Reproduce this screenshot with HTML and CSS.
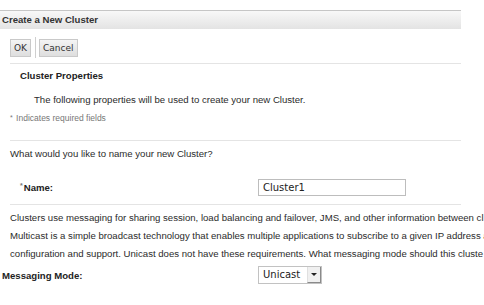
FILE: index.html
```html
<!DOCTYPE html>
<html lang="en">
<head>
<meta charset="UTF-8" />
<meta name="viewport" content="width=device-width, initial-scale=1" />
<title>Create a New Cluster</title>
<link rel="stylesheet" href="styles.css">
</head>
<body>
  <div class="page">
    <div class="titlebar">Create a New Cluster</div>

    <div class="content">
      <div class="toolbar">
        <button type="button" class="btn">OK</button>
        <span class="tb-sep"></span>
        <button type="button" class="btn">Cancel</button>
      </div>

      <section class="section section-props">
        <h2 class="section-title">Cluster Properties</h2>
        <p class="intro">The following properties will be used to create your new Cluster.</p>
        <p class="required-note"><span class="req">*</span> Indicates required fields</p>
      </section>

      <section class="section section-name">
        <p class="question">What would you like to name your new Cluster?</p>
        <div class="field-row">
          <label class="field-label field-label-req" for="cluster-name"><span class="req">*</span>Name:</label>
          <input type="text" id="cluster-name" class="text-input" value="Cluster1">
        </div>
      </section>

      <section class="section section-mode">
        <p class="help">
          Clusters use messaging for sharing session, load balancing and failover, JMS, and other information between cl<br>
          Multicast is a simple broadcast technology that enables multiple applications to subscribe to a given IP address a<br>
          configuration and support. Unicast does not have these requirements. What messaging mode should this cluste
        </p>
        <div class="field-row">
          <label class="field-label">Messaging Mode:</label>
          <div class="select">
            <span class="select-value">Unicast</span>
            <span class="select-arrow"></span>
          </div>
        </div>
      </section>
    </div>
  </div>
</body>
</html>
```

FILE: styles.css
```css
:root {
  --police: "Liberation Sans", Arial, sans-serif;
  --police-champ: "DejaVu Sans", Verdana, sans-serif;
  --texte: #2b2b2b;
  --trait: #e4e4e4;
}
html, body {
  margin: 0;
  background: #fff;
  overflow: hidden;
}
body {
  font-family: var(--police);
  font-size: 9.6px;
  color: var(--texte);
}
.page {
  padding-top: 10px;
  width: 461px;
}
.titlebar {
  height: 18px;
  line-height: 18px;
  border-top: 1px solid #c6c6c6;
  background: linear-gradient(#f8f8f8, #e3e3e3);
  padding-left: 2px;
  font-weight: 700;
  color: #333;
}
.content {
  padding-bottom: 7px;
}
.toolbar {
  display: flex;
  align-items: center;
  margin-left: 10px;
  padding: 8px 0 5px;
  border-bottom: 1px solid var(--trait);
}
.btn {
  height: 18px;
  padding: 0 3px;
  border: 1px solid #c9c9c9;
  border-radius: 0;
  background: linear-gradient(#f4f4f4, #dedede);
  font-family: var(--police-champ);
  font-size: 9px;
  color: #333;
  cursor: pointer;
}
.tb-sep {
  width: 1px;
  height: 21px;
  background: #cfcfcf;
  margin: 0 3px 0 4px;
}
.section {
  border-bottom: 1px solid var(--trait);
  margin-left: 10px;
}
.section p {
  margin: 0;
}
.section-props {
  padding: 6px 0 16px;
}
.section-title {
  margin: 0 0 12px 10px;
  font-size: 9.6px;
  line-height: 12px;
  font-weight: 700;
  color: #222;
}
.intro {
  line-height: 12px;
  padding-left: 24px;
  margin-bottom: 6px !important;
}
.required-note {
  line-height: 12px;
  margin-left: -8px;
  color: #777;
  font-size: 8.5px;
}
.req {
  font-size: 7px;
  vertical-align: top;
  color: #777;
  margin-right: 1px;
}
.section-name {
  padding: 7px 0 8px;
}
.question {
  line-height: 12px;
  margin-left: -8px;
  margin-bottom: 19px !important;
}
.field-row {
  display: grid;
  grid-template-columns: 248px auto;
  align-items: center;
}
.field-label {
  margin-left: -8px;
  font-weight: 700;
  color: #222;
}
.field-label-req {
  margin-left: 10px;
}
.text-input {
  width: 148px;
  height: 17px;
  box-sizing: border-box;
  border: 1px solid #bdbdbd;
  padding: 0 4px;
  font-family: var(--police-champ);
  font-size: 10px;
  color: #222;
  outline: none;
}
.section-mode {
  border-bottom: none;
  padding-top: 4px;
}
.help {
  white-space: nowrap;
  line-height: 18px;
  margin-left: -8px;
  margin-bottom: 3px !important;
}
.select {
  width: 64px;
  height: 18px;
  box-sizing: border-box;
  display: flex;
  align-items: stretch;
  border: 1px solid #c2c2c2;
  font-family: var(--police-champ);
  font-size: 10px;
  color: #222;
}
.select-value {
  flex: 1;
  padding-left: 4px;
  line-height: 16px;
}
.select-arrow {
  width: 12px;
  position: relative;
  background: #f0f0f0;
  border-left: 1px solid #e0e0e0;
  border-right: 1px solid #8a8a8a;
  border-bottom: 1px solid #8a8a8a;
}
.select-arrow::after {
  content: "";
  position: absolute;
  left: 3px;
  top: 6px;
  border-left: 3px solid transparent;
  border-right: 3px solid transparent;
  border-top: 3px solid #222;
}
```
